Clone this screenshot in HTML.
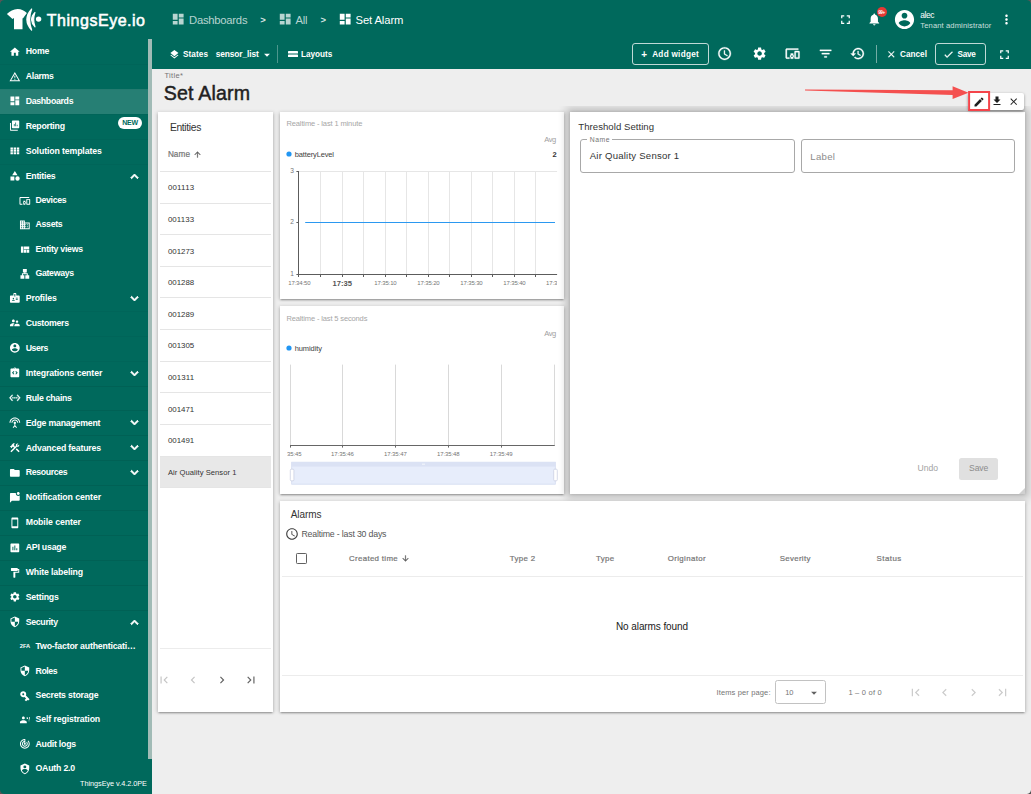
<!DOCTYPE html>
<html lang="en"><head><meta charset="utf-8"><title>ThingsEye.io - Set Alarm</title>
<style>
*{box-sizing:border-box;margin:0;padding:0}
html,body{width:1031px;height:794px;overflow:hidden;background:#eee;font-family:"Liberation Sans",sans-serif}
body{position:relative}
.t{position:absolute;white-space:nowrap;line-height:1;display:block;text-decoration:none}
.i{position:absolute;display:block;overflow:visible}
.abs{position:absolute}
#side,#head,#tool,#main,.card,.clip{position:absolute}
#side,#head,#tool{background:#00695c}
#side{overflow:hidden}
#main{background:#eee}
.card{background:#fff;box-shadow:0 1.6px 1.2px -1px rgba(0,0,0,.2),0 1.5px 2.2px 0 rgba(0,0,0,.14),0 .6px 3.6px .6px rgba(0,0,0,.16)}
.card.hot{box-shadow:0 0 8px 4px rgba(0,0,0,.2),0 0 3px rgba(0,0,0,.14)}
.clip{overflow:hidden}
</style></head>
<body>
<aside id="side" style="left:0.00px;top:0.00px;width:152.00px;height:794.00px;">
<svg class="i" style="left:0;top:0;width:46px;height:39px" viewBox="0 0 46 39" fill="#fff"><path d="M6.9 14.1 Q11.4 9.1 17.6 8.9 Q23.4 9.1 26.9 13.1 L22.9 18.6 L22.5 17.9 L22.5 29.2 L14 29.2 L14 17.9 L12.5 19.1 Z"/><path d="M31.6 9.1 Q27.1 13.5 26.9 19.6 Q27.1 25.6 31.6 30 Q29.7 25 29.6 19.6 Q29.7 14 31.6 9.1 Z" stroke="#fff" stroke-width="1.3" stroke-linejoin="round"/><path d="M35 12.4 Q31.700 15.500 31.500 19.600 Q31.700 23.600 35 26.800 Q33.700 23 33.700 19.600 Q33.700 16 35 12.400 Z" stroke="#fff" stroke-width="1.1" stroke-linejoin="round"/><circle cx="38.6" cy="19.1" r="2.7"/></svg>
<span class="t" style="left:46.80px;top:13.00px;font-size:16.00px;letter-spacing:0.519px;color:#fff;-webkit-text-stroke:.55px #fff;">ThingsEye.io</span>
<nav>
<svg class="i" style="left:9.30px;top:45.61px;width:11.70px;height:11.70px;" viewBox="0 0 24 24" fill="#fff"><path d="M10 20v-6h4v6h5v-8h3L12 3 2 12h3v8z"/></svg>
<a class="t" style="left:25.70px;top:47.00px;font-size:8.75px;letter-spacing:-0.203px;font-weight:700;color:#fff;">Home</a>
<div class="abs" style="left:0.00px;top:64.00px;width:148.20px;height:1.00px;background:rgba(0,0,0,.03)"></div>
<svg class="i" style="left:9.30px;top:70.53px;width:11.70px;height:11.70px;" viewBox="0 0 24 24" fill="#fff"><path d="M12 5.99L19.53 19H4.47L12 5.99M12 2L1 21h22L12 2zm1 14h-2v2h2v-2zm0-6h-2v4h2v-4z"/></svg>
<a class="t" style="left:25.70px;top:72.00px;font-size:8.75px;letter-spacing:-0.274px;font-weight:700;color:#fff;">Alarms</a>
<div class="abs" style="left:0.00px;top:88.84px;width:148.20px;height:24.92px;background:rgba(255,255,255,.15)"></div>
<div class="abs" style="left:0.00px;top:89.00px;width:148.20px;height:1.00px;background:rgba(0,0,0,.03)"></div>
<svg class="i" style="left:9.30px;top:95.45px;width:11.70px;height:11.70px;" viewBox="0 0 24 24" fill="#fff"><path d="M3 13h8V3H3v10zm0 8h8v-6H3v6zm10 0h8V11h-8v10zm0-18v6h8V3h-8z"/></svg>
<a class="t" style="left:25.70px;top:97.00px;font-size:8.75px;letter-spacing:-0.307px;font-weight:700;color:#fff;">Dashboards</a>
<div class="abs" style="left:0.00px;top:114.00px;width:148.20px;height:1.00px;background:rgba(0,0,0,.03)"></div>
<svg class="i" style="left:9.30px;top:120.37px;width:11.70px;height:11.70px;" viewBox="0 0 24 24" fill="#fff"><path d="M19 1H8c-1.1 0-2 .9-2 2v12c0 1.1.9 2 2 2h11c1.1 0 2-.9 2-2V3c0-1.1-.9-2-2-2zm-7.500 12H10V8h1.500v5zm3 0H13V5h1.500v8zm3 0H16v-3h1.500v3zM4 6H2v14c0 1.100.900 2 2 2h14v-2H4V6z"/></svg>
<a class="t" style="left:25.70px;top:122.00px;font-size:8.75px;letter-spacing:-0.252px;font-weight:700;color:#fff;">Reporting</a>
<div class="abs" style="left:118.20px;top:116.62px;width:23.80px;height:12.00px;border-radius:6px;background:#fff"></div>
<span class="t" style="left:122.20px;top:119.00px;font-size:7.00px;letter-spacing:-0.266px;font-weight:700;color:#00695c;">NEW</span>
<div class="abs" style="left:0.00px;top:139.00px;width:148.20px;height:1.00px;background:rgba(0,0,0,.03)"></div>
<svg class="i" style="left:9.30px;top:145.29px;width:11.70px;height:11.70px;" viewBox="0 0 24 24" fill="#fff"><path d="M3 5h5v4H3zM9.5 5h5v4h-5zM16 5h5v4h-5zM3 10h5v4H3zM9.5 10h5v4h-5zM16 10h5v4h-5zM3 15h5v4H3zM9.5 15h5v4h-5zM16 15h5v4h-5z"/></svg>
<a class="t" style="left:25.70px;top:147.00px;font-size:8.75px;letter-spacing:-0.127px;font-weight:700;color:#fff;">Solution templates</a>
<div class="abs" style="left:0.00px;top:164.00px;width:148.20px;height:1.00px;background:rgba(0,0,0,.03)"></div>
<svg class="i" style="left:9.30px;top:170.21px;width:11.70px;height:11.70px;" viewBox="0 0 24 24" fill="#fff"><path d="M12 2l-5.500 9h11z M17.500 13a4.500 4.500 0 1 0 0 9 4.500 4.500 0 1 0 0-9z M3 13.500h8v8H3z"/></svg>
<a class="t" style="left:25.70px;top:172.00px;font-size:8.75px;letter-spacing:-0.229px;font-weight:700;color:#fff;">Entities</a>
<svg class="i" style="left:126.90px;top:168.56px;width:15.00px;height:15.00px;" viewBox="0 0 24 24" fill="#fff" stroke="#fff" stroke-width="1.5"><path d="M12 8l-6 6 1.41 1.41L12 10.83l4.59 4.58L18 14z"/></svg>
<svg class="i" style="left:19.15px;top:194.84px;width:11.70px;height:11.70px;" viewBox="0 0 24 24" fill="#fff"><path d="M3 6h18V4H3c-1.1 0-2 .9-2 2v12c0 1.1.9 2 2 2h4v-2H3V6zm10 6H9v1.780c-.610.550-1 1.330-1 2.220s.390 1.670 1 2.220V20h4v-1.780c.610-.550 1-1.340 1-2.220s-.390-1.670-1-2.220V12zm-2 5.500c-.830 0-1.500-.670-1.500-1.500s.670-1.500 1.500-1.500 1.500.670 1.500 1.500-.670 1.500-1.500 1.500zM22 8h-6c-.500 0-1 .500-1 1v10c0 .500.500 1 1 1h6c.500 0 1-.500 1-1V9c0-.500-.500-1-1-1zm-1 10h-4v-8h4v8z"/></svg>
<a class="t" style="left:35.50px;top:196.00px;font-size:8.75px;letter-spacing:-0.330px;font-weight:700;color:#fff;">Devices</a>
<svg class="i" style="left:19.15px;top:219.17px;width:11.70px;height:11.70px;" viewBox="0 0 24 24" fill="#fff"><path d="M12 7V3H2v18h20V7H12zM6 19H4v-2h2v2zm0-4H4v-2h2v2zm0-4H4V9h2v2zm0-4H4V5h2v2zm4 12H8v-2h2v2zm0-4H8v-2h2v2zm0-4H8V9h2v2zm0-4H8V5h2v2zm10 12h-8v-2h2v-2h-2v-2h2v-2h-2V9h8v10zm-2-8h-2v2h2v-2zm0 4h-2v2h2v-2z"/></svg>
<a class="t" style="left:35.50px;top:220.00px;font-size:8.75px;letter-spacing:-0.299px;font-weight:700;color:#fff;">Assets</a>
<svg class="i" style="left:19.15px;top:243.50px;width:11.70px;height:11.70px;" viewBox="0 0 24 24" fill="#fff"><path d="M10 18h5v-6h-5v6zm-6 0h5V5H4v13zm12 0h5v-6h-5v6zM10 5v6h11V5H10z"/></svg>
<a class="t" style="left:35.50px;top:245.00px;font-size:8.75px;letter-spacing:-0.270px;font-weight:700;color:#fff;">Entity views</a>
<svg class="i" style="left:19.15px;top:267.82px;width:11.70px;height:11.70px;" viewBox="0 0 24 24" fill="#fff"><path d="M13 22h8v-7h-3v-4h-5V9h3V2H8v7h3v2H6v4H3v7h8v-7H8v-2h8v2h-3z"/></svg>
<a class="t" style="left:35.50px;top:269.00px;font-size:8.75px;letter-spacing:-0.322px;font-weight:700;color:#fff;">Gateways</a>
<svg class="i" style="left:9.30px;top:292.45px;width:11.70px;height:11.70px;" viewBox="0 0 24 24" fill="#fff"><path d="M20 7h-5V4c0-1.1-.9-2-2-2h-2c-1.1 0-2 .9-2 2v3H4c-1.1 0-2 .9-2 2v11c0 1.1.9 2 2 2h16c1.1 0 2-.9 2-2V9c0-1.1-.9-2-2-2zM9 12c.83 0 1.5.67 1.5 1.5S9.83 15 9 15s-1.5-.67-1.5-1.5S8.17 12 9 12zm3 6H6v-.75c0-1 2-1.5 3-1.5s3 .5 3 1.5V18zm1-9h-2V4h2v5zm5 7.5h-4V15h4v1.500zm0-3h-4V12h4v1.500z"/></svg>
<a class="t" style="left:25.70px;top:294.00px;font-size:8.75px;letter-spacing:-0.142px;font-weight:700;color:#fff;">Profiles</a>
<svg class="i" style="left:126.90px;top:290.80px;width:15.00px;height:15.00px;" viewBox="0 0 24 24" fill="#fff" stroke="#fff" stroke-width="1.5"><path d="M16.59 8.59L12 13.17 7.41 8.59 6 10l6 6 6-6z"/></svg>
<div class="abs" style="left:0.00px;top:311.00px;width:148.20px;height:1.00px;background:rgba(0,0,0,.03)"></div>
<svg class="i" style="left:9.30px;top:317.37px;width:11.70px;height:11.70px;" viewBox="0 0 24 24" fill="#fff"><path d="M16.5 12c1.38 0 2.49-1.12 2.49-2.5S17.88 7 16.5 7C15.12 7 14 8.12 14 9.5s1.12 2.5 2.5 2.5zM9 11c1.66 0 2.99-1.34 2.99-3S10.66 5 9 5C7.34 5 6 6.34 6 8s1.34 3 3 3zm7.5 3c-1.83 0-5.5.92-5.5 2.75V19h11v-2.250c0-1.830-3.670-2.750-5.500-2.750zM9 13c-2.330 0-7 1.170-7 3.500V19h7v-2.250c0-.850.330-2.340 2.370-3.470C10.500 13.100 9.660 13 9 13z"/></svg>
<a class="t" style="left:25.70px;top:319.00px;font-size:8.75px;letter-spacing:-0.288px;font-weight:700;color:#fff;">Customers</a>
<div class="abs" style="left:0.00px;top:336.00px;width:148.20px;height:1.00px;background:rgba(0,0,0,.03)"></div>
<svg class="i" style="left:9.30px;top:342.29px;width:11.70px;height:11.70px;" viewBox="0 0 24 24" fill="#fff"><path d="M12 2C6.48 2 2 6.48 2 12s4.48 10 10 10 10-4.48 10-10S17.52 2 12 2zm0 3c1.66 0 3 1.34 3 3s-1.34 3-3 3-3-1.34-3-3 1.340-3 3-3zm0 14.200c-2.500 0-4.710-1.280-6-3.220.030-1.990 4-3.080 6-3.080 1.990 0 5.970 1.090 6 3.080-1.290 1.940-3.500 3.220-6 3.220z"/></svg>
<a class="t" style="left:25.70px;top:344.00px;font-size:8.75px;letter-spacing:-0.406px;font-weight:700;color:#fff;">Users</a>
<div class="abs" style="left:0.00px;top:361.00px;width:148.20px;height:1.00px;background:rgba(0,0,0,.03)"></div>
<svg class="i" style="left:9.30px;top:367.21px;width:11.70px;height:11.70px;" viewBox="0 0 24 24" fill="#fff"><path d="M19 3h-4.18C14.4 1.84 13.3 1 12 1s-2.4.84-2.82 2H5c-1.1 0-2 .9-2 2v14c0 1.1.9 2 2 2h14c1.1 0 2-.9 2-2V5c0-1.1-.9-2-2-2zM11 14.17l-1.41 1.42L6 12l3.59-3.59L11 9.83 8.83 12 11 14.17zm1-9.92c-.41 0-.75-.34-.75-.75s.34-.75.75-.75.75.34.75.75-.34.75-.75.75zm2.41 11.34L13 14.17 15.17 12 13 9.83l1.41-1.42L18 12l-3.59 3.59z"/></svg>
<a class="t" style="left:25.70px;top:369.00px;font-size:8.75px;letter-spacing:-0.120px;font-weight:700;color:#fff;">Integrations center</a>
<svg class="i" style="left:126.90px;top:365.56px;width:15.00px;height:15.00px;" viewBox="0 0 24 24" fill="#fff" stroke="#fff" stroke-width="1.5"><path d="M16.59 8.59L12 13.17 7.41 8.59 6 10l6 6 6-6z"/></svg>
<div class="abs" style="left:0.00px;top:386.00px;width:148.20px;height:1.00px;background:rgba(0,0,0,.07)"></div>
<svg class="i" style="left:9.30px;top:392.13px;width:11.70px;height:11.70px;" viewBox="0 0 24 24" fill="#fff" stroke="#fff" stroke-width="0.8"><path d="M7.77 6.76L6.23 5.48.82 12l5.41 6.52 1.54-1.28L3.42 12l4.35-5.24zM7 13h2v-2H7v2zm10-2h-2v2h2v-2zm-6 2h2v-2h-2v2zm6.77-7.52l-1.54 1.28L20.58 12l-4.35 5.24 1.54 1.28L23.18 12l-5.41-6.52z"/></svg>
<a class="t" style="left:25.70px;top:394.00px;font-size:8.75px;letter-spacing:-0.281px;font-weight:700;color:#fff;">Rule chains</a>
<div class="abs" style="left:0.00px;top:410.00px;width:148.20px;height:1.00px;background:rgba(0,0,0,.07)"></div>
<svg class="i" style="left:9.30px;top:417.05px;width:11.70px;height:11.70px;" viewBox="0 0 24 24" fill="#fff"><path d="M12 5c-3.87 0-7 3.13-7 7h2c0-2.76 2.24-5 5-5s5 2.24 5 5h2c0-3.87-3.13-7-7-7zm1 9.29c.88-.39 1.5-1.26 1.5-2.29 0-1.38-1.12-2.5-2.5-2.5S9.5 10.62 9.5 12c0 1.02.62 1.9 1.5 2.29v3.3L7.59 21 9 22.41l3-3 3 3L16.41 21 13 17.59v-3.3zM12 1C5.93 1 1 5.93 1 12h2c0-4.97 4.03-9 9-9s9 4.03 9 9h2c0-6.07-4.93-11-11-11z"/></svg>
<a class="t" style="left:25.70px;top:419.00px;font-size:8.75px;letter-spacing:-0.214px;font-weight:700;color:#fff;">Edge management</a>
<svg class="i" style="left:126.90px;top:415.40px;width:15.00px;height:15.00px;" viewBox="0 0 24 24" fill="#fff" stroke="#fff" stroke-width="1.5"><path d="M16.59 8.59L12 13.17 7.41 8.59 6 10l6 6 6-6z"/></svg>
<div class="abs" style="left:0.00px;top:435.00px;width:148.20px;height:1.00px;background:rgba(0,0,0,.07)"></div>
<svg class="i" style="left:9.30px;top:441.97px;width:11.70px;height:11.70px;" viewBox="0 0 24 24" fill="#fff"><path d="M13.783 15.172l2.121-2.121 5.996 5.996-2.121 2.121zM17.5 10c1.93 0 3.5-1.57 3.5-3.5 0-.58-.16-1.12-.41-1.6l-2.7 2.7-1.49-1.49 2.7-2.7c-.48-.25-1.02-.41-1.6-.41C15.57 3 14 4.57 14 6.5c0 .41.08.8.21 1.16l-1.85 1.85-1.78-1.78.71-.71-1.41-1.41L12 3.49c-1.17-1.17-3.07-1.17-4.24 0L4.22 7.030l1.410 1.410H2.810l-.710.710 3.540 3.540.710-.710V9.150l1.410 1.410.710-.710 1.780 1.780-7.410 7.410 2.120 2.120L16.340 9.790c.360.130.750.210 1.160.210z"/></svg>
<a class="t" style="left:25.70px;top:444.00px;font-size:8.75px;letter-spacing:-0.180px;font-weight:700;color:#fff;">Advanced features</a>
<svg class="i" style="left:126.90px;top:440.32px;width:15.00px;height:15.00px;" viewBox="0 0 24 24" fill="#fff" stroke="#fff" stroke-width="1.5"><path d="M16.59 8.59L12 13.17 7.41 8.59 6 10l6 6 6-6z"/></svg>
<div class="abs" style="left:0.00px;top:460.00px;width:148.20px;height:1.00px;background:rgba(0,0,0,.07)"></div>
<svg class="i" style="left:9.30px;top:466.89px;width:11.70px;height:11.70px;" viewBox="0 0 24 24" fill="#fff"><path d="M10 4H4c-1.1 0-1.99.9-1.99 2L2 18c0 1.1.9 2 2 2h16c1.1 0 2-.9 2-2V8c0-1.1-.9-2-2-2h-8l-2-2z"/></svg>
<a class="t" style="left:25.70px;top:468.00px;font-size:8.75px;letter-spacing:-0.355px;font-weight:700;color:#fff;">Resources</a>
<svg class="i" style="left:126.90px;top:465.24px;width:15.00px;height:15.00px;" viewBox="0 0 24 24" fill="#fff" stroke="#fff" stroke-width="1.5"><path d="M16.59 8.59L12 13.17 7.41 8.59 6 10l6 6 6-6z"/></svg>
<div class="abs" style="left:0.00px;top:485.00px;width:148.20px;height:1.00px;background:rgba(0,0,0,.07)"></div>
<svg class="i" style="left:9.30px;top:491.81px;width:11.70px;height:11.70px;" viewBox="0 0 24 24" fill="#fff"><path d="M22 6.98V16c0 1.1-.9 2-2 2H6l-4 4V4c0-1.1.9-2 2-2h10.1c-.06.32-.1.66-.1 1 0 2.760 2.240 5 5 5 1.130 0 2.160-.390 3-1.020zM16 3c0 1.660 1.340 3 3 3s3-1.340 3-3-1.340-3-3-3-3 1.340-3 3z"/></svg>
<a class="t" style="left:25.70px;top:493.00px;font-size:8.75px;letter-spacing:-0.078px;font-weight:700;color:#fff;">Notification center</a>
<div class="abs" style="left:0.00px;top:510.00px;width:148.20px;height:1.00px;background:rgba(0,0,0,.07)"></div>
<svg class="i" style="left:9.30px;top:516.73px;width:11.70px;height:11.70px;" viewBox="0 0 24 24" fill="#fff"><path d="M17 1.01L7 1c-1.1 0-2 .9-2 2v18c0 1.1.9 2 2 2h10c1.1 0 2-.9 2-2V3c0-1.1-.9-1.990-2-1.990zM17 19H7V5h10v14z"/></svg>
<a class="t" style="left:25.70px;top:518.00px;font-size:8.75px;letter-spacing:-0.100px;font-weight:700;color:#fff;">Mobile center</a>
<div class="abs" style="left:0.00px;top:535.00px;width:148.20px;height:1.00px;background:rgba(0,0,0,.07)"></div>
<svg class="i" style="left:9.30px;top:541.65px;width:11.70px;height:11.70px;" viewBox="0 0 24 24" fill="#fff"><path d="M19 3H5c-1.1 0-2 .9-2 2v14c0 1.1.9 2 2 2h14c1.1 0 2-.9 2-2V5c0-1.1-.9-2-2-2zM9 17H7v-7h2v7zm4 0h-2V7h2v10zm4 0h-2v-4h2v4z"/></svg>
<a class="t" style="left:25.70px;top:543.00px;font-size:8.75px;letter-spacing:-0.213px;font-weight:700;color:#fff;">API usage</a>
<div class="abs" style="left:0.00px;top:560.00px;width:148.20px;height:1.00px;background:rgba(0,0,0,.07)"></div>
<svg class="i" style="left:9.30px;top:566.57px;width:11.70px;height:11.70px;" viewBox="0 0 24 24" fill="#fff"><path d="M18 4V3c0-.55-.45-1-1-1H5c-.55 0-1 .45-1 1v4c0 .55.45 1 1 1h12c.55 0 1-.45 1-1V6h1v4H9v11c0 .55.45 1 1 1h2c.55 0 1-.45 1-1v-9h8V4h-3z"/></svg>
<a class="t" style="left:25.70px;top:568.00px;font-size:8.75px;letter-spacing:-0.154px;font-weight:700;color:#fff;">White labeling</a>
<div class="abs" style="left:0.00px;top:585.00px;width:148.20px;height:1.00px;background:rgba(0,0,0,.07)"></div>
<svg class="i" style="left:9.30px;top:591.49px;width:11.70px;height:11.70px;" viewBox="0 0 24 24" fill="#fff"><path d="M19.14,12.94c0.04-0.3,0.06-0.61,0.06-0.94c0-0.32-0.02-0.64-0.07-0.94l2.03-1.58c0.18-0.14,0.23-0.41,0.12-0.61 l-1.92-3.32c-0.12-0.22-0.37-0.29-0.59-0.22l-2.39,0.96c-0.5-0.38-1.03-0.7-1.62-0.94L14.4,2.81c-0.04-0.24-0.24-0.41-0.48-0.41 h-3.84c-0.24,0-0.43,0.17-0.47,0.41L9.25,5.35C8.66,5.59,8.12,5.92,7.63,6.29L5.24,5.33c-0.22-0.08-0.47,0-0.59,0.22L2.74,8.87 C2.62,9.08,2.66,9.34,2.86,9.48l2.03,1.58C4.84,11.36,4.8,11.69,4.8,12s0.02,0.64,0.07,0.94l-2.03,1.58 c-0.18,0.14-0.23,0.41-0.12,0.61l1.92,3.32c0.12,0.22,0.37,0.29,0.59,0.22l2.39-0.96c0.5,0.38,1.03,0.7,1.62,0.94l0.36,2.54 c0.05,0.24,0.24,0.41,0.48,0.41h3.84c0.24,0,0.44-0.17,0.47-0.41l0.36-2.54c0.59-0.24,1.13-0.56,1.62-0.94l2.39,0.96 c0.22,0.08,0.47,0,0.59-0.22l1.92-3.32c0.12-0.22,0.07-0.47-0.12-0.61L19.14,12.94z M12,15.6c-1.98,0-3.6-1.62-3.6-3.6 s1.62-3.6,3.6-3.6s3.6,1.62,3.6,3.6S13.98,15.6,12,15.6z"/></svg>
<a class="t" style="left:25.70px;top:593.00px;font-size:8.75px;letter-spacing:-0.188px;font-weight:700;color:#fff;">Settings</a>
<div class="abs" style="left:0.00px;top:610.00px;width:148.20px;height:1.00px;background:rgba(0,0,0,.07)"></div>
<svg class="i" style="left:9.30px;top:616.41px;width:11.70px;height:11.70px;" viewBox="0 0 24 24" fill="#fff"><path d="M12 1L3 5v6c0 5.55 3.84 10.74 9 12 5.16-1.26 9-6.45 9-12V5l-9-4zm0 10.99h7c-.53 4.12-3.28 7.79-7 8.94V12H5V6.3l7-3.11v8.8z"/></svg>
<a class="t" style="left:25.70px;top:618.00px;font-size:8.75px;letter-spacing:-0.304px;font-weight:700;color:#fff;">Security</a>
<svg class="i" style="left:126.90px;top:614.76px;width:15.00px;height:15.00px;" viewBox="0 0 24 24" fill="#fff" stroke="#fff" stroke-width="1.5"><path d="M12 8l-6 6 1.41 1.41L12 10.83l4.59 4.58L18 14z"/></svg>
<span class="t" style="left:19.80px;top:644.00px;font-size:5.70px;letter-spacing:-0.027px;font-weight:700;color:#fff;">2FA</span>
<a class="t" style="left:35.50px;top:642.00px;font-size:8.75px;letter-spacing:-0.176px;font-weight:700;color:#fff;">Two-factor authenticati…</a>
<svg class="i" style="left:19.15px;top:665.36px;width:11.70px;height:11.70px;" viewBox="0 0 24 24" fill="#fff"><path d="M12 1L3 5v6c0 5.55 3.84 10.74 9 12 5.16-1.26 9-6.45 9-12V5l-9-4zm0 10.99h7c-.53 4.12-3.28 7.79-7 8.94V12H5V6.3l7-3.11v8.8z"/></svg>
<a class="t" style="left:35.50px;top:667.00px;font-size:8.75px;letter-spacing:-0.431px;font-weight:700;color:#fff;">Roles</a>
<svg class="i" style="left:19.30px;top:689.54px;width:12.00px;height:12.00px;transform:rotate(45deg);" viewBox="0 0 24 24" fill="#fff"><path d="M12.65 10C11.83 7.67 9.61 6 7 6c-3.31 0-6 2.69-6 6s2.69 6 6 6c2.61 0 4.83-1.67 5.65-4H17v4h4v-4h2v-4H12.65zM7 14c-1.1 0-2-.9-2-2s.9-2 2-2 2 .9 2 2-.9 2-2 2z"/></svg>
<a class="t" style="left:35.50px;top:691.00px;font-size:8.75px;letter-spacing:-0.190px;font-weight:700;color:#fff;">Secrets storage</a>
<svg class="i" style="left:19.15px;top:714.02px;width:11.70px;height:11.70px;" viewBox="0 0 24 24" fill="#fff"><path d="M9 11c1.660 0 3-1.340 3-3S10.660 5 9 5 6 6.340 6 8s1.340 3 3 3zm0 2c-2.330 0-7 1.170-7 3.500V19h14v-2.500c0-2.330-4.670-3.500-7-3.500zm7.500-2.500c1.100 0 2-.900 2-2s-.900-2-2-2c-.350 0-.670.100-.950.250.400.800.450 1.750.450 1.750s-.050.950-.450 1.750c.280.150.600.250.950.250zM21 6l-1 6h1.500l1-6zm-1.200 7.500h1.500V15h-1.500z"/></svg>
<a class="t" style="left:35.50px;top:715.00px;font-size:8.75px;letter-spacing:-0.119px;font-weight:700;color:#fff;">Self registration</a>
<svg class="i" style="left:19.15px;top:738.36px;width:11.70px;height:11.70px;" viewBox="0 0 24 24" fill="#fff"><path d="M19.07 4.93l-1.41 1.41C19.1 7.79 20 9.79 20 12c0 4.42-3.58 8-8 8s-8-3.58-8-8c0-4.08 3.05-7.44 7-7.93v2.02C8.16 6.57 6 9.03 6 12c0 3.31 2.69 6 6 6s6-2.69 6-6c0-1.66-.67-3.16-1.76-4.24l-1.41 1.41C15.55 9.9 16 10.9 16 12c0 2.21-1.79 4-4 4s-4-1.79-4-4c0-1.86 1.28-3.41 3-3.86v2.14c-.6.35-1 .98-1 1.72 0 1.1.9 2 2 2s2-.9 2-2c0-.74-.4-1.38-1-1.72V2h-1C6.48 2 2 6.48 2 12s4.48 10 10 10 10-4.48 10-10c0-2.76-1.12-5.26-2.93-7.07z"/></svg>
<a class="t" style="left:35.50px;top:740.00px;font-size:8.75px;letter-spacing:-0.241px;font-weight:700;color:#fff;">Audit logs</a>
<svg class="i" style="left:19.15px;top:762.69px;width:11.70px;height:11.70px;" viewBox="0 0 24 24" fill="#fff"><path d="M12,1L3,5V11C3,16.55 6.84,21.74 12,23C17.16,21.74 21,16.55 21,11V5L12,1M12,5A3,3 0 0,1 15,8A3,3 0 0,1 12,11A3,3 0 0,1 9,8A3,3 0 0,1 12,5M17.13,17C15.92,18.85 14.11,20.24 12,20.92C9.89,20.24 8.08,18.85 6.87,17C6.53,16.5 6.24,16 6,15.47C6,13.82 8.71,12.47 12,12.47C15.29,12.47 18,13.79 18,15.47C17.76,16 17.47,16.5 17.13,17Z"/></svg>
<a class="t" style="left:35.50px;top:764.00px;font-size:8.75px;letter-spacing:-0.203px;font-weight:700;color:#fff;">OAuth 2.0</a>
</nav>
<span class="t" style="left:80.00px;top:780.00px;font-size:7.30px;letter-spacing:-0.040px;color:#fff;">ThingsEye v.4.2.0PE</span>
<div class="abs" style="left:148.20px;top:39.00px;width:3.80px;height:720.00px;background:#a1bbb6"></div>
</aside>
<header id="head" style="left:152.00px;top:0.00px;width:879.00px;height:39.00px;">
<svg class="i" style="left:19.40px;top:12.20px;width:14.40px;height:14.40px;" viewBox="0 0 24 24" fill="rgba(255,255,255,.72)"><path d="M3 13h8V3H3v10zm0 8h8v-6H3v6zm10 0h8V11h-8v10zm0-18v6h8V3h-8z"/></svg>
<span class="t" style="left:37.00px;top:15.00px;font-size:11.25px;letter-spacing:-0.240px;color:rgba(255,255,255,.72);">Dashboards</span>
<span class="t" style="left:108.20px;top:15.00px;font-size:9.50px;font-weight:700;color:rgba(255,255,255,.85);">&gt;</span>
<svg class="i" style="left:126.10px;top:12.20px;width:14.40px;height:14.40px;" viewBox="0 0 24 24" fill="rgba(255,255,255,.72)"><path d="M3 13h8V3H3v10zm0 8h8v-6H3v6zm10 0h8V11h-8v10zm0-18v6h8V3h-8z"/></svg>
<span class="t" style="left:143.40px;top:15.00px;font-size:11.25px;letter-spacing:-0.202px;color:rgba(255,255,255,.72);">All</span>
<span class="t" style="left:168.60px;top:15.00px;font-size:9.50px;font-weight:700;color:rgba(255,255,255,.85);">&gt;</span>
<svg class="i" style="left:186.10px;top:12.20px;width:14.40px;height:14.40px;" viewBox="0 0 24 24" fill="#fff"><path d="M3 13h8V3H3v10zm0 8h8v-6H3v6zm10 0h8V11h-8v10zm0-18v6h8V3h-8z"/></svg>
<span class="t" style="left:203.50px;top:15.00px;font-size:11.25px;letter-spacing:-0.108px;color:#fff;">Set Alarm</span>
<svg class="i" style="left:685.50px;top:12.00px;width:15.00px;height:15.00px;" viewBox="0 0 24 24" fill="#fff"><path d="M7 14H5v5h5v-2H7v-3zm-2-4h2V7h3V5H5v5zm12 7h-3v2h5v-5h-2v3zM14 5v2h3v3h2V5h-5z"/></svg>
<svg class="i" style="left:714.90px;top:12.20px;width:14.60px;height:14.60px;" viewBox="0 0 24 24" fill="#fff"><path d="M12 22c1.1 0 2-.9 2-2h-4c0 1.1.89 2 2 2zm6-6v-5c0-3.070-1.640-5.640-4.500-6.320V4c0-.830-.670-1.500-1.500-1.500s-1.500.670-1.500 1.500v.680C7.630 5.360 6 7.920 6 11v5l-2 2v1h16v-1l-2-2z"/></svg>
<div class="abs" style="left:724.80px;top:7.30px;width:9.80px;height:9.80px;border-radius:5px;background:#e53935"></div>
<span class="t" style="left:726.20px;top:11.00px;font-size:4.60px;letter-spacing:-0.401px;font-weight:700;color:#fff;">99+</span>
<svg class="i" style="left:741.20px;top:8.10px;width:23.00px;height:23.00px;" viewBox="0 0 24 24" fill="#fff"><path d="M12 2C6.48 2 2 6.48 2 12s4.48 10 10 10 10-4.48 10-10S17.52 2 12 2zm0 3c1.66 0 3 1.34 3 3s-1.34 3-3 3-3-1.34-3-3 1.340-3 3-3zm0 14.200c-2.500 0-4.710-1.280-6-3.220.030-1.990 4-3.080 6-3.080 1.990 0 5.970 1.090 6 3.080-1.290 1.940-3.500 3.220-6 3.220z"/></svg>
<span class="t" style="left:768.30px;top:11.00px;font-size:8.40px;letter-spacing:-0.436px;color:#fff;">alec</span>
<span class="t" style="left:768.30px;top:22.00px;font-size:7.60px;letter-spacing:0.113px;color:rgba(255,255,255,.8);">Tenant administrator</span>
<svg class="i" style="left:847.20px;top:12.00px;width:15.00px;height:15.00px;" viewBox="0 0 24 24" fill="#fff"><path d="M12 8c1.1 0 2-.9 2-2s-.9-2-2-2-2 .9-2 2 .9 2 2 2zm0 2c-1.1 0-2 .9-2 2s.9 2 2 2 2-.9 2-2-.9-2-2-2zm0 6c-1.1 0-2 .9-2 2s.9 2 2 2 2-.9 2-2-.9-2-2-2z"/></svg>
</header>
<div id="tool" style="left:152.00px;top:39.00px;width:879.00px;height:30.00px;">
<svg class="i" style="left:16.70px;top:9.80px;width:10.80px;height:10.80px;" viewBox="0 0 24 24" fill="#fff"><path d="M11.99 18.54l-7.37-5.73L3 14.07l9 7 9-7-1.63-1.27-7.38 5.74zM12 16l7.36-5.73L21 9l-9-7-9 7 1.63 1.27L12 16z"/></svg>
<span class="t" style="left:30.90px;top:12.00px;font-size:8.20px;letter-spacing:0.118px;font-weight:700;color:#fff;">States</span>
<span class="t" style="left:63.70px;top:11.00px;font-size:8.40px;letter-spacing:-0.105px;font-weight:700;color:#fff;">sensor_list</span>
<svg class="i" style="left:107.80px;top:8.60px;width:14.00px;height:14.00px;" viewBox="0 0 24 24" fill="#fff"><path d="M7 10l5 5 5-5z"/></svg>
<div class="abs" style="left:125.00px;top:6.00px;width:1.00px;height:18.00px;background:rgba(255,255,255,.3)"></div>
<svg class="i" style="left:135.70px;top:12.00px;width:10px;height:6px" viewBox="0 0 10 6" fill="#fff"><rect x="0" y="0" width="10" height="2.6" rx=".6"/><rect x="0" y="3.4" width="10" height="2.600" rx=".6"/></svg>
<span class="t" style="left:148.90px;top:12.00px;font-size:8.20px;letter-spacing:0.011px;font-weight:700;color:#fff;">Layouts</span>
<div class="abs" style="left:480.00px;top:4.00px;width:76.60px;height:22.00px;border:1px solid rgba(255,255,255,.75);border-radius:3px"></div>
<span class="t" style="left:489.30px;top:11.00px;font-size:10.00px;font-weight:700;color:#fff;">+</span>
<span class="t" style="left:500.20px;top:12.00px;font-size:8.20px;letter-spacing:0.269px;font-weight:700;color:#fff;">Add widget</span>
<svg class="i" style="left:565.30px;top:7.40px;width:15.20px;height:15.20px;" viewBox="0 0 24 24" fill="#fff" stroke="#fff" stroke-width="0.5"><path d="M11.99 2C6.47 2 2 6.48 2 12s4.47 10 9.99 10C17.52 22 22 17.52 22 12S17.52 2 11.99 2zM12 20c-4.42 0-8-3.58-8-8s3.58-8 8-8 8 3.580 8 8-3.580 8-8 8zm.500-13H11v6l5.250 3.150.750-1.230-4.500-2.670z"/></svg>
<svg class="i" style="left:599.90px;top:7.40px;width:15.20px;height:15.20px;" viewBox="0 0 24 24" fill="#fff"><path d="M19.14,12.94c0.04-0.3,0.06-0.61,0.06-0.94c0-0.32-0.02-0.64-0.07-0.94l2.03-1.58c0.18-0.14,0.23-0.41,0.12-0.61 l-1.92-3.32c-0.12-0.22-0.37-0.29-0.59-0.22l-2.39,0.96c-0.5-0.38-1.03-0.7-1.62-0.94L14.4,2.81c-0.04-0.24-0.24-0.41-0.48-0.41 h-3.84c-0.24,0-0.43,0.17-0.47,0.41L9.25,5.35C8.66,5.59,8.12,5.92,7.63,6.29L5.24,5.33c-0.22-0.08-0.47,0-0.59,0.22L2.74,8.87 C2.62,9.08,2.66,9.34,2.86,9.48l2.03,1.58C4.84,11.36,4.8,11.69,4.8,12s0.02,0.64,0.07,0.94l-2.03,1.58 c-0.18,0.14-0.23,0.41-0.12,0.61l1.92,3.32c0.12,0.22,0.37,0.29,0.59,0.22l2.39-0.96c0.5,0.38,1.03,0.7,1.62,0.94l0.36,2.54 c0.05,0.24,0.24,0.41,0.48,0.41h3.84c0.24,0,0.44-0.17,0.47-0.41l0.36-2.54c0.59-0.24,1.13-0.56,1.62-0.94l2.39,0.96 c0.22,0.08,0.47,0,0.59-0.22l1.92-3.32c0.12-0.22,0.07-0.47-0.12-0.61L19.14,12.94z M12,15.6c-1.98,0-3.6-1.62-3.6-3.6 s1.62-3.6,3.6-3.6s3.6,1.62,3.6,3.6S13.98,15.6,12,15.6z"/></svg>
<svg class="i" style="left:633.00px;top:7.40px;width:15.20px;height:15.20px;" viewBox="0 0 24 24" fill="#fff" stroke="#fff" stroke-width="0.5"><path d="M3 6h18V4H3c-1.1 0-2 .9-2 2v12c0 1.1.9 2 2 2h4v-2H3V6zm10 6H9v1.780c-.610.550-1 1.330-1 2.220s.390 1.670 1 2.220V20h4v-1.780c.610-.550 1-1.340 1-2.220s-.390-1.670-1-2.220V12zm-2 5.500c-.830 0-1.500-.670-1.500-1.500s.670-1.500 1.500-1.500 1.500.670 1.500 1.500-.670 1.500-1.500 1.500zM22 8h-6c-.500 0-1 .500-1 1v10c0 .500.500 1 1 1h6c.500 0 1-.500 1-1V9c0-.500-.500-1-1-1zm-1 10h-4v-8h4v8z"/></svg>
<svg class="i" style="left:665.70px;top:7.40px;width:15.20px;height:15.20px;" viewBox="0 0 24 24" fill="#fff" stroke="#fff" stroke-width="0.5"><path d="M10 18h4v-2h-4v2zM3 6v2h18V6H3zm3 7h12v-2H6v2z"/></svg>
<svg class="i" style="left:698.40px;top:7.40px;width:15.20px;height:15.20px;" viewBox="0 0 24 24" fill="#fff" stroke="#fff" stroke-width="0.5"><path d="M13 3c-4.97 0-9 4.03-9 9H1l3.890 3.890.070.140L9 12H6c0-3.870 3.130-7 7-7s7 3.130 7 7-3.130 7-7 7c-1.930 0-3.680-.790-4.940-2.060l-1.420 1.420C8.270 19.990 10.510 21 13 21c4.970 0 9-4.030 9-9s-4.030-9-9-9zm-1 5v5l4.280 2.540.720-1.210-3.500-2.080V8H12z"/></svg>
<div class="abs" style="left:724.00px;top:6.00px;width:1.00px;height:18.00px;background:rgba(255,255,255,.45)"></div>
<svg class="i" style="left:733.70px;top:9.90px;width:10.60px;height:10.60px;" viewBox="0 0 24 24" fill="#fff" stroke="#fff" stroke-width="0.6"><path d="M19 6.41L17.59 5 12 10.59 6.41 5 5 6.41 10.59 12 5 17.59 6.41 19 12 13.41 17.59 19 19 17.59 13.41 12z"/></svg>
<span class="t" style="left:748.00px;top:12.00px;font-size:8.20px;letter-spacing:0.022px;font-weight:700;color:#fff;">Cancel</span>
<div class="abs" style="left:783.00px;top:4.00px;width:50.80px;height:22.00px;border:1px solid rgba(255,255,255,.75);border-radius:3px"></div>
<svg class="i" style="left:790.70px;top:9.70px;width:11.00px;height:11.00px;" viewBox="0 0 24 24" fill="#fff" stroke="#fff" stroke-width="0.8"><path d="M9 16.2L4.8 12l-1.4 1.4L9 19 21 7l-1.4-1.4L9 16.2z"/></svg>
<span class="t" style="left:805.40px;top:12.00px;font-size:8.20px;letter-spacing:-0.217px;font-weight:700;color:#fff;">Save</span>
<svg class="i" style="left:844.50px;top:7.50px;width:15.00px;height:15.00px;" viewBox="0 0 24 24" fill="#fff"><path d="M7 14H5v5h5v-2H7v-3zm-2-4h2V7h3V5H5v5zm12 7h-3v2h5v-5h-2v3zM14 5v2h3v3h2V5h-5z"/></svg>
</div>
<main id="main" style="left:152.00px;top:69.00px;width:879.00px;height:725.00px;">
<span class="t" style="left:12.50px;top:3.00px;font-size:7.50px;letter-spacing:0.318px;color:#757575;">Title*</span>
<h1 class="t" style="left:11.80px;top:15.00px;font-size:19.60px;letter-spacing:0.155px;color:#212121;font-weight:400;-webkit-text-stroke:.45px #212121;">Set Alarm</h1>
<div class="clip" style="left:0.00px;top:37.00px;width:879.00px;height:688.00px;">
<section class="card" style="left:6.20px;top:5.90px;width:115.00px;height:600.30px;">
<h2 class="t" style="left:11.70px;top:11.10px;font-size:10.30px;letter-spacing:-0.325px;color:#333;font-weight:400;">Entities</h2>
<span class="t" style="left:9.70px;top:39.10px;font-size:8.20px;letter-spacing:0.076px;color:#757575;-webkit-text-stroke:.2px #757575;">Name</span>
<svg class="i" style="left:34.90px;top:38.20px;width:9.00px;height:9.00px;" viewBox="0 0 24 24" fill="#616161" stroke="#616161" stroke-width="0.7"><path d="M4 12l1.41 1.41L11 7.83V20h2V7.83l5.58 5.59L20 12l-8-8-8 8z"/></svg>
<div class="abs" style="left:2.00px;top:59.10px;width:110.80px;height:1.00px;background:#e5e5e5"></div>
<span class="t" style="left:9.70px;top:72.10px;font-size:7.90px;letter-spacing:0.223px;color:#333;">001113</span>
<div class="abs" style="left:2.00px;top:91.10px;width:110.80px;height:1.00px;background:#e5e5e5"></div>
<span class="t" style="left:9.70px;top:104.10px;font-size:7.90px;letter-spacing:0.105px;color:#333;">001133</span>
<div class="abs" style="left:2.00px;top:122.10px;width:110.80px;height:1.00px;background:#e5e5e5"></div>
<span class="t" style="left:9.70px;top:136.10px;font-size:7.90px;letter-spacing:-0.012px;color:#333;">001273</span>
<div class="abs" style="left:2.00px;top:154.10px;width:110.80px;height:1.00px;background:#e5e5e5"></div>
<span class="t" style="left:9.70px;top:167.10px;font-size:7.90px;letter-spacing:-0.012px;color:#333;">001288</span>
<div class="abs" style="left:2.00px;top:185.10px;width:110.80px;height:1.00px;background:#e5e5e5"></div>
<span class="t" style="left:9.70px;top:199.10px;font-size:7.90px;letter-spacing:-0.012px;color:#333;">001289</span>
<div class="abs" style="left:2.00px;top:217.10px;width:110.80px;height:1.00px;background:#e5e5e5"></div>
<span class="t" style="left:9.70px;top:230.10px;font-size:7.90px;letter-spacing:-0.012px;color:#333;">001305</span>
<div class="abs" style="left:2.00px;top:249.10px;width:110.80px;height:1.00px;background:#e5e5e5"></div>
<span class="t" style="left:9.70px;top:262.10px;font-size:7.90px;letter-spacing:0.105px;color:#333;">001311</span>
<div class="abs" style="left:2.00px;top:280.10px;width:110.80px;height:1.00px;background:#e5e5e5"></div>
<span class="t" style="left:9.70px;top:294.10px;font-size:7.90px;letter-spacing:-0.012px;color:#333;">001471</span>
<div class="abs" style="left:2.00px;top:312.10px;width:110.80px;height:1.00px;background:#e5e5e5"></div>
<span class="t" style="left:9.70px;top:325.10px;font-size:7.90px;letter-spacing:-0.012px;color:#333;">001491</span>
<div class="abs" style="left:2.00px;top:344.10px;width:110.80px;height:1.00px;background:#e5e5e5"></div>
<div class="abs" style="left:2.00px;top:345.10px;width:110.80px;height:30.00px;background:#e8e8e8"></div>
<span class="t" style="left:9.70px;top:357.10px;font-size:7.60px;letter-spacing:0.054px;color:#333;">Air Quality Sensor 1</span>
<div class="abs" style="left:2.00px;top:375.10px;width:110.80px;height:1.00px;background:#e5e5e5"></div>
<div class="abs" style="left:2.00px;top:536.10px;width:110.80px;height:1.00px;background:#ececec"></div>
<svg class="i" style="left:-0.90px;top:560.70px;width:14.00px;height:14.00px;" viewBox="0 0 24 24" fill="#c4c4c4"><path d="M18.41 16.59L13.82 12l4.59-4.59L17 6l-6 6 6 6zM6 6h2v12H6z"/></svg>
<svg class="i" style="left:28.10px;top:560.70px;width:14.00px;height:14.00px;" viewBox="0 0 24 24" fill="#c4c4c4"><path d="M15.41 7.41L14 6l-6 6 6 6 1.41-1.41L10.83 12z"/></svg>
<svg class="i" style="left:56.80px;top:560.70px;width:14.00px;height:14.00px;" viewBox="0 0 24 24" fill="#616161"><path d="M10 6L8.59 7.41 13.17 12l-4.58 4.59L10 18l6-6z"/></svg>
<svg class="i" style="left:86.20px;top:560.70px;width:14.00px;height:14.00px;" viewBox="0 0 24 24" fill="#616161"><path d="M5.59 7.41L10.18 12l-4.59 4.59L7 18l6-6-6-6zM16 6h2v12h-2z"/></svg>
</section>
<section class="card" style="left:127.60px;top:5.90px;width:284.10px;height:187.10px;">
<span class="t" style="left:6.90px;top:8.10px;font-size:7.50px;letter-spacing:-0.129px;color:#a6a6a6;">Realtime - last 1 minute</span>
<span class="t" style="left:264.60px;top:24.10px;font-size:7.50px;letter-spacing:-0.394px;color:#9e9e9e;">Avg</span>
<svg class="i" style="left:5.90px;top:38.30px;width:8px;height:8px" viewBox="0 0 8 8"><circle cx="4" cy="4" r="2.6" fill="#2196f3"/></svg>
<span class="t" style="left:15.10px;top:39.10px;font-size:7.50px;letter-spacing:-0.141px;color:#424242;">batteryLevel</span>
<span class="t" style="left:272.80px;top:39.10px;font-size:7.50px;font-weight:700;color:#333;">2</span>
<svg class="i" style="left:0.40px;top:53.10px;width:283.00px;height:125.00px" viewBox="280.00 165.00 283.00 125.00"><line x1="299.00" y1="171.50" x2="557.10" y2="171.50" stroke="#e6e6e6" stroke-width="1"/><line x1="320.50" y1="171.00" x2="320.50" y2="274.40" stroke="#e6e6e6" stroke-width="1"/><line x1="320.50" y1="274.40" x2="320.50" y2="277.00" stroke="#5c5c5c" stroke-width="1"/><line x1="342.50" y1="171.00" x2="342.50" y2="274.40" stroke="#e6e6e6" stroke-width="1"/><line x1="342.50" y1="274.40" x2="342.50" y2="277.00" stroke="#5c5c5c" stroke-width="1"/><line x1="363.50" y1="171.00" x2="363.50" y2="274.40" stroke="#e6e6e6" stroke-width="1"/><line x1="363.50" y1="274.40" x2="363.50" y2="277.00" stroke="#5c5c5c" stroke-width="1"/><line x1="385.50" y1="171.00" x2="385.50" y2="274.40" stroke="#e6e6e6" stroke-width="1"/><line x1="385.50" y1="274.40" x2="385.50" y2="277.00" stroke="#5c5c5c" stroke-width="1"/><line x1="406.50" y1="171.00" x2="406.50" y2="274.40" stroke="#e6e6e6" stroke-width="1"/><line x1="406.50" y1="274.40" x2="406.50" y2="277.00" stroke="#5c5c5c" stroke-width="1"/><line x1="428.50" y1="171.00" x2="428.50" y2="274.40" stroke="#e6e6e6" stroke-width="1"/><line x1="428.50" y1="274.40" x2="428.50" y2="277.00" stroke="#5c5c5c" stroke-width="1"/><line x1="449.50" y1="171.00" x2="449.50" y2="274.40" stroke="#e6e6e6" stroke-width="1"/><line x1="449.50" y1="274.40" x2="449.50" y2="277.00" stroke="#5c5c5c" stroke-width="1"/><line x1="471.50" y1="171.00" x2="471.50" y2="274.40" stroke="#e6e6e6" stroke-width="1"/><line x1="471.50" y1="274.40" x2="471.50" y2="277.00" stroke="#5c5c5c" stroke-width="1"/><line x1="492.50" y1="171.00" x2="492.50" y2="274.40" stroke="#e6e6e6" stroke-width="1"/><line x1="492.50" y1="274.40" x2="492.50" y2="277.00" stroke="#5c5c5c" stroke-width="1"/><line x1="514.50" y1="171.00" x2="514.50" y2="274.40" stroke="#e6e6e6" stroke-width="1"/><line x1="514.50" y1="274.40" x2="514.50" y2="277.00" stroke="#5c5c5c" stroke-width="1"/><line x1="535.50" y1="171.00" x2="535.50" y2="274.40" stroke="#e6e6e6" stroke-width="1"/><line x1="535.50" y1="274.40" x2="535.50" y2="277.00" stroke="#5c5c5c" stroke-width="1"/><line x1="298.50" y1="171.00" x2="298.50" y2="277.00" stroke="#5c5c5c" stroke-width="1"/><line x1="296.40" y1="274.50" x2="557.10" y2="274.50" stroke="#5c5c5c" stroke-width="1"/><line x1="296.40" y1="171.50" x2="298.50" y2="171.50" stroke="#5c5c5c" stroke-width="1"/><line x1="296.40" y1="222.50" x2="298.50" y2="222.50" stroke="#5c5c5c" stroke-width="1"/><line x1="305.20" y1="222.50" x2="555.00" y2="222.50" stroke="#2b98f0" stroke-width="1.1"/></svg>
<span class="t" style="left:10.70px;top:56.10px;font-size:6.60px;color:#757575;">3</span>
<span class="t" style="left:10.70px;top:107.10px;font-size:6.60px;color:#757575;">2</span>
<span class="t" style="left:10.70px;top:159.10px;font-size:6.60px;color:#757575;">1</span>
<div class="clip" style="left:0.00px;top:165.10px;width:277.80px;height:12.00px;">
<span class="t" style="left:8.60px;top:3.00px;font-size:6.00px;letter-spacing:-0.136px;color:#757575;">17:34:50</span>
<span class="t" style="left:52.85px;top:3.00px;font-size:7.60px;letter-spacing:0.016px;font-weight:700;color:#555;">17:35</span>
<span class="t" style="left:94.70px;top:3.00px;font-size:6.00px;letter-spacing:-0.136px;color:#757575;">17:35:10</span>
<span class="t" style="left:137.70px;top:3.00px;font-size:6.00px;letter-spacing:-0.136px;color:#757575;">17:35:20</span>
<span class="t" style="left:180.70px;top:3.00px;font-size:6.00px;letter-spacing:-0.136px;color:#757575;">17:35:30</span>
<span class="t" style="left:223.70px;top:3.00px;font-size:6.00px;letter-spacing:-0.136px;color:#757575;">17:35:40</span>
<span class="t" style="left:266.40px;top:3.00px;font-size:6.00px;letter-spacing:-0.136px;color:#757575;">17:35:50</span>
</div>
</section>
<section class="card" style="left:127.60px;top:200.00px;width:284.10px;height:188.10px;">
<span class="t" style="left:6.90px;top:9.00px;font-size:7.50px;letter-spacing:-0.137px;color:#a6a6a6;">Realtime - last 5 seconds</span>
<span class="t" style="left:264.60px;top:24.00px;font-size:7.50px;letter-spacing:-0.394px;color:#9e9e9e;">Avg</span>
<svg class="i" style="left:5.90px;top:38.20px;width:8px;height:8px" viewBox="0 0 8 8"><circle cx="4" cy="4" r="2.6" fill="#2196f3"/></svg>
<span class="t" style="left:15.10px;top:39.00px;font-size:7.50px;letter-spacing:-0.089px;color:#424242;">humidity</span>
<svg class="i" style="left:0.40px;top:54.00px;width:283.00px;height:130.00px" viewBox="280.00 360.00 283.00 130.00"><line x1="290.50" y1="364.60" x2="290.50" y2="445.00" stroke="#d9d9d9" stroke-width="1"/><line x1="290.50" y1="445.00" x2="290.50" y2="447.60" stroke="#666" stroke-width="1"/><line x1="342.50" y1="364.60" x2="342.50" y2="445.00" stroke="#d9d9d9" stroke-width="1"/><line x1="342.50" y1="445.00" x2="342.50" y2="447.60" stroke="#666" stroke-width="1"/><line x1="395.50" y1="364.60" x2="395.50" y2="445.00" stroke="#d9d9d9" stroke-width="1"/><line x1="395.50" y1="445.00" x2="395.50" y2="447.60" stroke="#666" stroke-width="1"/><line x1="448.50" y1="364.60" x2="448.50" y2="445.00" stroke="#d9d9d9" stroke-width="1"/><line x1="448.50" y1="445.00" x2="448.50" y2="447.60" stroke="#666" stroke-width="1"/><line x1="501.50" y1="364.60" x2="501.50" y2="445.00" stroke="#d9d9d9" stroke-width="1"/><line x1="501.50" y1="445.00" x2="501.50" y2="447.60" stroke="#666" stroke-width="1"/><line x1="554.50" y1="364.60" x2="554.50" y2="445.00" stroke="#d9d9d9" stroke-width="1"/><line x1="290.00" y1="445.50" x2="554.80" y2="445.50" stroke="#666" stroke-width="1"/><rect x="291.7" y="462.2" width="263.6" height="22" fill="#e7edfb" stroke="#d3dbf0" stroke-width=".8"/><rect x="291.7" y="462.2" width="263.6" height="4.4" fill="#dbe2f4"/><rect x="422" y="463.7" width="3" height=".9" fill="#fff" opacity=".8"/><rect x="290.30" y="469.2" width="3.6" height="11.6" rx="1" fill="#fff" stroke="#c5cbe0" stroke-width=".7"/><rect x="553.70" y="469.2" width="3.6" height="11.6" rx="1" fill="#fff" stroke="#c5cbe0" stroke-width=".7"/></svg>
<div class="clip" style="left:7.50px;top:141.80px;width:270.00px;height:12.00px;">
<span class="t" style="left:-8.30px;top:3.20px;font-size:6.00px;letter-spacing:-0.079px;color:#757575;">17:35:45</span>
<span class="t" style="left:44.00px;top:3.20px;font-size:6.00px;letter-spacing:-0.079px;color:#757575;">17:35:46</span>
<span class="t" style="left:96.90px;top:3.20px;font-size:6.00px;letter-spacing:-0.079px;color:#757575;">17:35:47</span>
<span class="t" style="left:149.80px;top:3.20px;font-size:6.00px;letter-spacing:-0.079px;color:#757575;">17:35:48</span>
<span class="t" style="left:202.70px;top:3.20px;font-size:6.00px;letter-spacing:-0.079px;color:#757575;">17:35:49</span>
</div>
</section>
<section class="card hot" style="left:418.20px;top:5.90px;width:455.00px;height:382.10px;">
<h2 class="t" style="left:8.10px;top:10.10px;font-size:9.60px;letter-spacing:0.035px;color:#333;font-weight:400;">Threshold Setting</h2>
<div class="abs" style="left:10.30px;top:27.30px;width:214.40px;height:33.60px;border:1px solid #a8a8a8;border-radius:3px"></div>
<div class="abs" style="left:16.80px;top:26.30px;width:25.00px;height:3.00px;background:#fff"></div>
<label class="t" style="left:19.60px;top:25.10px;font-size:6.80px;letter-spacing:0.554px;color:#757575;">Name</label>
<span class="t" style="left:19.50px;top:39.10px;font-size:9.60px;letter-spacing:0.218px;color:#333;">Air Quality Sensor 1</span>
<div class="abs" style="left:230.40px;top:27.30px;width:214.40px;height:33.60px;border:1px solid #a8a8a8;border-radius:3px"></div>
<label class="t" style="left:240.10px;top:40.10px;font-size:9.60px;letter-spacing:0.303px;color:#8c8c8c;">Label</label>
<span class="t" style="left:347.40px;top:352.10px;font-size:8.60px;letter-spacing:-0.019px;color:#a3a3a3;">Undo</span>
<div class="abs" style="left:389.00px;top:346.40px;width:38.80px;height:21.40px;border-radius:2.5px;background:#e0e0e0"></div>
<span class="t" style="left:398.90px;top:352.10px;font-size:8.60px;letter-spacing:-0.167px;color:#8c8c8c;">Save</span>
<svg class="i" style="right:0;bottom:0;width:6px;height:6px" viewBox="0 0 6 6"><path d="M6 0V6H0Z" fill="#d0d0d0"/></svg>
</section>
<section class="card" style="left:127.60px;top:394.60px;width:745.50px;height:211.70px;">
<h2 class="t" style="left:11.20px;top:9.40px;font-size:10.00px;letter-spacing:-0.102px;color:#333;font-weight:400;">Alarms</h2>
<svg class="i" style="left:5.10px;top:26.40px;width:14.00px;height:14.00px;" viewBox="0 0 24 24" fill="#424242"><path d="M11.99 2C6.47 2 2 6.48 2 12s4.47 10 9.99 10C17.52 22 22 17.52 22 12S17.52 2 11.99 2zM12 20c-4.42 0-8-3.58-8-8s3.58-8 8-8 8 3.580 8 8-3.580 8-8 8zm.500-13H11v6l5.250 3.150.750-1.230-4.500-2.670z"/></svg>
<span class="t" style="left:21.80px;top:29.40px;font-size:8.75px;letter-spacing:-0.177px;color:#555;">Realtime - last 30 days</span>
<div class="abs" style="left:16.50px;top:52.60px;width:11.00px;height:11.00px;border:1.2px solid #616161;border-radius:1.3px"></div>
<span class="t" style="left:69.40px;top:54.40px;font-size:7.90px;letter-spacing:0.325px;color:#757575;-webkit-text-stroke:.2px #757575;">Created time</span>
<span class="t" style="left:230.20px;top:54.40px;font-size:7.90px;letter-spacing:0.317px;color:#757575;-webkit-text-stroke:.2px #757575;">Type 2</span>
<span class="t" style="left:316.40px;top:54.40px;font-size:7.90px;letter-spacing:0.358px;color:#757575;-webkit-text-stroke:.2px #757575;">Type</span>
<span class="t" style="left:388.10px;top:54.40px;font-size:7.90px;letter-spacing:0.380px;color:#757575;-webkit-text-stroke:.2px #757575;">Originator</span>
<span class="t" style="left:500.10px;top:54.40px;font-size:7.90px;letter-spacing:0.309px;color:#757575;-webkit-text-stroke:.2px #757575;">Severity</span>
<span class="t" style="left:596.90px;top:54.40px;font-size:7.90px;letter-spacing:0.481px;color:#757575;-webkit-text-stroke:.2px #757575;">Status</span>
<svg class="i" style="left:121.10px;top:53.50px;width:9.00px;height:9.00px;" viewBox="0 0 24 24" fill="#616161" stroke="#616161" stroke-width="0.7"><path d="M20 12l-1.41-1.41L13 16.17V4h-2v12.17l-5.58-5.59L4 12l8 8 8-8z"/></svg>
<div class="abs" style="left:2.40px;top:75.40px;width:741.00px;height:1.00px;background:#ececec"></div>
<span class="t" style="left:336.40px;top:121.40px;font-size:10.00px;letter-spacing:-0.090px;color:#212121;">No alarms found</span>
<div class="abs" style="left:2.40px;top:174.40px;width:741.00px;height:1.00px;background:#ececec"></div>
<span class="t" style="left:436.90px;top:188.40px;font-size:7.50px;letter-spacing:0.135px;color:#757575;">Items per page:</span>
<div class="abs" style="left:495.90px;top:179.70px;width:50.60px;height:24.00px;border:1px solid #c2c2c2;border-radius:2.5px"></div>
<span class="t" style="left:505.70px;top:188.40px;font-size:7.50px;letter-spacing:-0.241px;color:#757575;">10</span>
<svg class="i" style="left:527.40px;top:185.10px;width:14.00px;height:14.00px;" viewBox="0 0 24 24" fill="#616161"><path d="M7 10l5 5 5-5z"/></svg>
<span class="t" style="left:568.80px;top:188.40px;font-size:7.50px;letter-spacing:0.225px;color:#757575;">1 – 0 of 0</span>
<svg class="i" style="left:628.20px;top:184.40px;width:15.00px;height:15.00px;" viewBox="0 0 24 24" fill="#cccccc"><path d="M18.41 16.59L13.82 12l4.59-4.59L17 6l-6 6 6 6zM6 6h2v12H6z"/></svg>
<svg class="i" style="left:657.40px;top:184.40px;width:15.00px;height:15.00px;" viewBox="0 0 24 24" fill="#cccccc"><path d="M15.41 7.41L14 6l-6 6 6 6 1.41-1.41L10.83 12z"/></svg>
<svg class="i" style="left:686.60px;top:184.40px;width:15.00px;height:15.00px;" viewBox="0 0 24 24" fill="#cccccc"><path d="M10 6L8.59 7.41 13.17 12l-4.58 4.59L10 18l6-6z"/></svg>
<svg class="i" style="left:715.90px;top:184.40px;width:15.00px;height:15.00px;" viewBox="0 0 24 24" fill="#cccccc"><path d="M5.59 7.41L10.18 12l-4.59 4.59L7 18l6-6-6-6zM16 6h2v12h-2z"/></svg>
</section>
</div>
<div class="abs" style="left:816.00px;top:23.60px;width:56.40px;height:17.40px;background:#fff;border-radius:2px;box-shadow:0 1px 3px rgba(0,0,0,.4)"></div>
<svg class="i" style="left:821.30px;top:26.60px;width:12.00px;height:12.00px;" viewBox="0 0 24 24" fill="#1f1f1f"><path d="M3 17.25V21h3.75L17.81 9.94l-3.75-3.75L3 17.25zM20.71 7.04c.39-.39.39-1.02 0-1.41l-2.34-2.34c-.39-.39-1.02-.39-1.41 0l-1.83 1.83 3.75 3.75 1.83-1.83z"/></svg>
<svg class="i" style="left:838.60px;top:26.40px;width:12.00px;height:12.00px;" viewBox="0 0 24 24" fill="#1f1f1f"><path d="M19 9h-4V3H9v6H5l7 7 7-7zM5 18v2h14v-2H5z"/></svg>
<svg class="i" style="left:855.60px;top:26.80px;width:11.40px;height:11.40px;" viewBox="0 0 24 24" fill="#1f1f1f"><path d="M19 6.41L17.59 5 12 10.59 6.41 5 5 6.41 10.59 12 5 17.59 6.41 19 12 13.41 17.59 19 19 17.59 13.41 12z"/></svg>
<svg class="i" style="left:648.00px;top:15.00px;width:200px;height:30px" viewBox="800 84 200 30"><path d="M805 89.4 L952.6 90.3 L952.6 86.2 L968.5 92.7 L952.6 99 L952.6 95 L805 90.500 Z" fill="#f4504f"/><rect x="969.1" y="92" width="20" height="18" fill="none" stroke="#f4444a" stroke-width="2"/></svg>
</main>
<div class="abs" style="left:0;top:0;width:4px;height:4px;background:radial-gradient(circle at 100% 100%,transparent 3.4px,#555 4.2px)"></div>
<div class="abs" style="right:0;top:0;width:4px;height:4px;background:radial-gradient(circle at 0 100%,transparent 3.4px,#555 4.2px)"></div>
<div class="abs" style="left:0;bottom:0;width:4px;height:4px;background:radial-gradient(circle at 100% 0,transparent 3.4px,#555 4.2px)"></div>
<div class="abs" style="right:0;bottom:0;width:4px;height:4px;background:radial-gradient(circle at 0 0,transparent 3.4px,#555 4.2px)"></div>
</body></html>
